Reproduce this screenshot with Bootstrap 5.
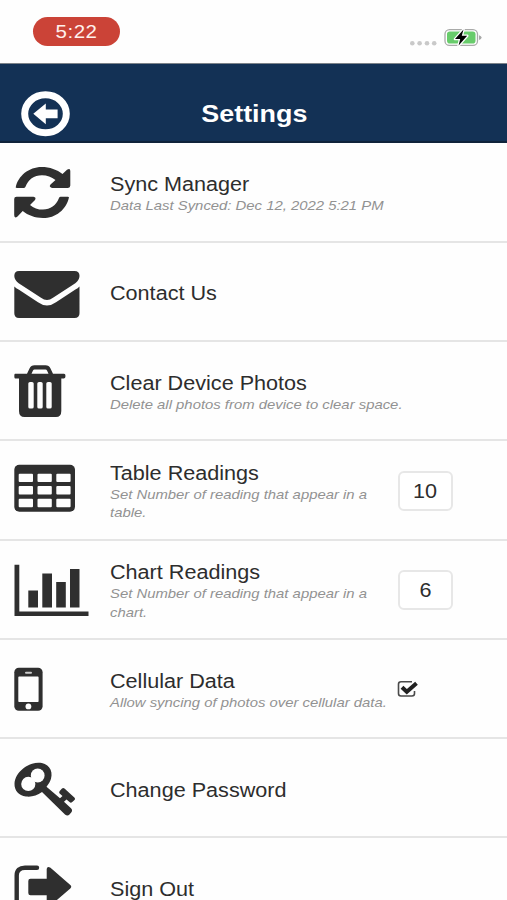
<!DOCTYPE html>
<html lang="en">
<head>
<meta charset="utf-8">
<meta name="viewport" content="width=device-width, initial-scale=1">
<title>Settings</title>
<link href="https://cdn.jsdelivr.net/npm/bootstrap@5.3.0/dist/css/bootstrap.min.css" rel="stylesheet">
<style>
body{font-family:"Liberation Sans",Arial,sans-serif;background:#fefefe;color:#2d2d2d;height:900px;overflow:hidden}
.status-strip{height:63px;padding:17px 25px 0 33px}
.time-pill{width:87px;height:29px;background:#cb4337;color:#fff0ec;font-size:19px;line-height:29px;letter-spacing:.5px}
.wide{display:inline-block;transform:scaleX(1.08);transform-origin:0 50%;white-space:nowrap}
.note .wide{transform:scaleX(1.118)}
.time-pill .wide,.title .wide,.num .wide{transform-origin:50% 50%}
.title .wide{transform:scaleX(1.12)}
.topbar{height:80.4px;background:#133155;border-top:1px solid #7c8289;border-bottom:2px solid #10233b}
.back{width:49px;margin-left:21px;margin-top:22px}
.title{font-size:24px;font-weight:700;color:#fff;line-height:30px;padding-top:23px;width:120px;margin-left:124px}
.setting{height:99.3px;padding-top:2px;border-bottom:2px solid #e5e5e5;background:#fefefe}
.pic{width:110px;height:99.3px;fill:#2f2f2f}
.name{font-size:20px;line-height:24px;color:#2d2d2d}
.note{font-size:13.3px;line-height:18.5px;font-style:italic;color:#929292;margin-top:1px}
.copy{width:287px;padding-top:2px}
.num{width:55px;height:40px;border:2px solid #e7e7e7;border-radius:6px;font-size:20px;line-height:36px;background:#fff;margin-left:1px}
</style>
<script src="https://cdn.jsdelivr.net/npm/bootstrap@5.3.0/dist/js/bootstrap.bundle.min.js"></script>
</head>
<body>
<header>
<div class="status-strip d-flex justify-content-between align-items-start">
<div class="time-pill rounded-pill text-center"><span class="wide">5:22</span></div>
<svg width="74" height="24" viewBox="409 26 74 24" style="margin-top:9px">
<g fill="#c9c9c9"><circle cx="413.3" cy="43.3" r="2.3"/><circle cx="420.6" cy="43.3" r="2.3"/><circle cx="428" cy="43.3" r="2.3"/><circle cx="435.2" cy="43.3" r="2.3"/></g>
<rect x="446" y="29.6" width="32.5" height="15.8" rx="4.5" fill="#fff" stroke="#a9aaa9" stroke-width="1.3"/>
<rect x="448" y="31.5" width="28.5" height="12" rx="2.8" fill="#68cc6b"/>
<path d="M480 35.3q2.6.6 2.6 2.3t-2.6 2.3z" fill="#a9aaa9"/>
<path d="M464.5 29.5 456 39h5.2l-1.6 6.5 8.6-9.7h-5.4z" fill="#000" stroke="#fff" stroke-width="2.6" paint-order="stroke" stroke-linejoin="round"/>
</svg>
</div>
<nav class="topbar d-flex align-items-center">
<svg class="back" height="46" viewBox="21 91 49 46"><ellipse cx="45.5" cy="113.8" rx="20.8" ry="19" fill="none" stroke="#fff" stroke-width="7"/><path d="M33.3 113.8 45.8 103.5V109.6H57.6V118.2H45.8V124.2Z" fill="#fff"/></svg>
<div class="title text-center"><span class="wide">Settings</span></div>
</nav>
</header>
<main>
<div class="setting d-flex align-items-center">
<svg class="pic" viewBox="0 143.4 110 99.3"><path d="M15.7 188C18 176 29 167.3 41.5 167.3C50 167.3 57 170 62.5 174.3L67 170.2Q70.3 168 70.3 171.5V186Q70.3 188.3 68 188.3H52Q48.500 187.500 50.500 185L55.500 180.500C51.500 177.200 47 175.600 42 175.600C34 175.600 28 180 25.600 187Q25.200 188.300 24 188.300H17Q15.700 188.300 15.700 188ZM69 197.600C66.500 210 55.500 218.500 43 218.500C35 218.500 28 215.800 22.700 211.500L17.500 217Q14.200 219.300 14.200 215.500V199.500Q14.200 197.200 16.500 197.200H33.500Q36.500 197.800 35 200.500L30 205.300C33.500 208.300 38 210 43 210C50.500 210 56 206 59 198.500Q59.500 197.200 60.600 197.200H68Q69 197.200 69 197.600Z"/></svg>
<div class="copy"><div class="name"><span class="wide">Sync Manager</span></div><div class="note"><span class="wide">Data Last Synced: Dec 12, 2022 5:21 PM</span></div></div>
</div>
<div class="setting d-flex align-items-center">
<svg class="pic" viewBox="0 242.7 110 99.3"><path d="M19 270.800H74.500Q79.500 270.800 79.500 275.500C79.500 280 76 282.500 73 284.500L53 297.500Q47 302 41 297.500L21 284.500C18 282.500 14.300 280 14.300 275.500Q14.300 270.800 19 270.800ZM14.300 286.200Q16 288 19 289.500L38 302Q47 308.500 56 302L75 289.500Q78 288 79.500 286.200V313Q79.500 317.800 74.500 317.800H19Q14.300 317.800 14.300 313Z"/></svg>
<div class="copy"><div class="name"><span class="wide">Contact Us</span></div></div>
</div>
<div class="setting d-flex align-items-center">
<svg class="pic" viewBox="0 342 110 99.3"><path fill-rule="evenodd" d="M15 373.800H27L29.500 368.500Q31 365.300 34.500 365.300H45.500Q49 365.300 50.500 368.500L53 373.800H64Q65.500 373.800 65.500 376.100T64 378.400H61.300V411Q61.300 417 56 417H24.500Q19 417 19 411V378.400H15Q14.300 378.400 14.300 376.100T15 373.800ZM31.500 373.800H48.500L47 370.600Q46.500 369.500 45.500 369.500H34.500Q33.500 369.500 33 370.600ZM30 382Q28.300 382 28.300 383.500V407Q28.300 408.500 30 408.500H32Q33.700 408.500 33.700 407V383.500Q33.700 382 32 382ZM39 382Q37.300 382 37.300 383.500V407Q37.300 408.500 39 408.500H41Q42.700 408.500 42.700 407V383.500Q42.700 382 41 382ZM48 382Q46.300 382 46.300 383.500V407Q46.300 408.500 48 408.500H50Q51.700 408.500 51.700 407V383.500Q51.700 382 50 382Z"/></svg>
<div class="copy"><div class="name"><span class="wide">Clear Device Photos</span></div><div class="note"><span class="wide">Delete all photos from device to clear space.</span></div></div>
</div>
<div class="setting d-flex align-items-center">
<svg class="pic" viewBox="0 441.300 110 99.300"><rect x="14.300" y="465" width="60.700" height="47" rx="5"/><g fill="#fefefe"><rect x="18.700" y="474" width="14.300" height="8.300" rx="1"/><rect x="37.500" y="474" width="14.300" height="8.300" rx="1"/><rect x="56.300" y="474" width="14.300" height="8.300" rx="1"/><rect x="18.700" y="486.300" width="14.300" height="8.500" rx="1"/><rect x="37.500" y="486.300" width="14.300" height="8.500" rx="1"/><rect x="56.300" y="486.300" width="14.300" height="8.500" rx="1"/><rect x="18.700" y="499" width="14.300" height="8.600" rx="1"/><rect x="37.500" y="499" width="14.300" height="8.600" rx="1"/><rect x="56.300" y="499" width="14.300" height="8.600" rx="1"/></g></svg>
<div class="copy"><div class="name"><span class="wide">Table Readings</span></div><div class="note"><span class="wide">Set Number of reading that appear in a<br>table.</span></div></div>
<div class="num text-center"><span class="wide">10</span></div>
</div>
<div class="setting d-flex align-items-center">
<svg class="pic" viewBox="0 540.600 110 99.300"><path d="M14.500 564.300H19.300V611.200H88.500V615.500H14.500ZM28.300 590H38V607H28.300ZM42.300 573H52V607H42.300ZM56.200 581.500H65.800V607H56.200ZM70 568.700H79.500V607H70Z"/></svg>
<div class="copy"><div class="name"><span class="wide">Chart Readings</span></div><div class="note"><span class="wide">Set Number of reading that appear in a<br>chart.</span></div></div>
<div class="num text-center"><span class="wide">6</span></div>
</div>
<div class="setting d-flex align-items-center">
<svg class="pic" viewBox="0 639.900 110 99.300"><rect x="14.300" y="667.600" width="28.300" height="43" rx="4.500"/><g fill="#fefefe"><rect x="18.300" y="676.500" width="20.300" height="25.500" rx=".8"/><rect x="25" y="671.600" width="7" height="2" rx="1" fill="#ccc"/><circle cx="28.400" cy="706.300" r="2.900"/></g></svg>
<div class="copy"><div class="name"><span class="wide">Cellular Data</span></div><div class="note"><span class="wide">Allow syncing of photos over cellular data.</span></div></div>
<svg width="22" height="20" viewBox="397 680 22 20"><path d="M412 681.800H401Q398.500 681.800 398.500 684.300V693.500Q398.500 696 401 696H412Q414.500 696 414.500 693.500V691" fill="none" stroke="#4a4a4a" stroke-width="1.600"/><path d="M402 687.300 406.800 691.800 416.500 683.300" fill="none" stroke="#222" stroke-width="4"/></svg>
</div>
<div class="setting d-flex align-items-center">
<svg class="pic" viewBox="0 739.200 110 99.300"><path d="M38.500 763C48 763 53.500 770 51 779C50 782 48.500 784.500 46.500 787L60 798.500L62.500 796.300L59.600 793.600Q58.600 792.500 59.700 791.300L62 788.800Q63.200 787.600 64.500 788.700L74.600 798Q75.700 799.200 74.500 800.300L72 802.500Q70.800 803.500 69.500 802.300L66.500 799.600L64 801.900L71 808.500Q73 810.500 71.200 812.800L69.500 814.700Q67.500 816.500 65 814.700L42 792.200C37 796 31.500 797.300 26 796.700C18.500 795.800 14.300 790.500 14.500 784C15 773 27 763 38.500 763Z"/><g fill="#fefefe"><circle cx="28.300" cy="784.100" r="7.100"/><circle cx="37.700" cy="775.700" r="6.900"/></g></svg>
<div class="copy"><div class="name"><span class="wide">Change Password</span></div></div>
</div>
<div class="setting d-flex align-items-center">
<svg class="pic" viewBox="0 838.500 110 99.300"><path d="M37 868.300H25Q16.700 868.300 16.700 876V902Q16.700 909 25 909H37" fill="none" stroke="#2f2f2f" stroke-width="4.400" stroke-linecap="round"/><path d="M30.500 879.200H46.700V869.500Q47.200 866.300 50.500 868.300L70.300 885.600Q72.200 887.300 70.300 889L50.500 906Q47.200 908 46.700 905V895.800H30.500Q28.300 895.800 28.300 893.500V881.500Q28.300 879.200 30.500 879.200Z"/></svg>
<div class="copy"><div class="name"><span class="wide">Sign Out</span></div></div>
</div>
</main>
</body>
</html>
